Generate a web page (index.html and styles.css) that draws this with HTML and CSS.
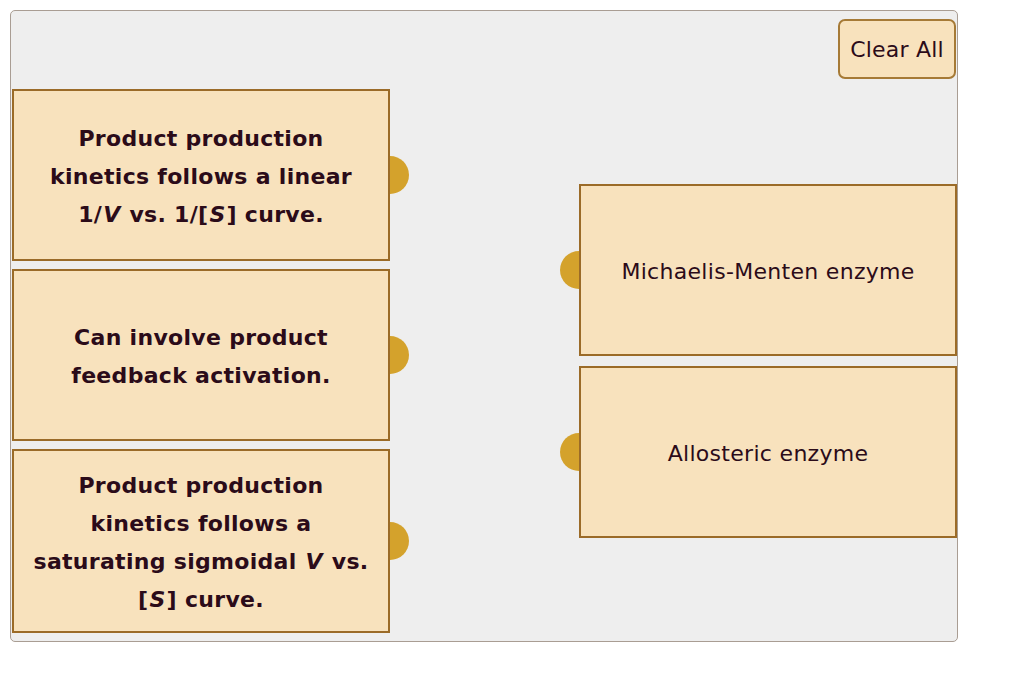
FILE: index.html
```html
<!DOCTYPE html>
<html lang="en">
<head>
<meta charset="utf-8">
<title>Matching</title>
<link rel="stylesheet" href="styles.css">
</head>
<body>
<div class="board">
  <div class="toolbar">
    <button class="clear-btn" type="button">Clear All</button>
  </div>
  <div class="columns">
    <div class="col col-left">
      <div class="card card-source"><p class="card-text bold">Product production kinetics follows a linear 1/<i>V</i> vs. 1/[<i>S</i>] curve.</p></div>
      <div class="card card-source"><p class="card-text bold">Can involve product feedback activation.</p></div>
      <div class="card card-source"><p class="card-text bold">Product production kinetics follows a saturating sigmoidal <i>V</i> vs. [<i>S</i>] curve.</p></div>
    </div>
    <div class="col col-right">
      <div class="card card-target"><p class="card-text">Michaelis-Menten enzyme</p></div>
      <div class="card card-target"><p class="card-text">Allosteric enzyme</p></div>
    </div>
  </div>
</div>
</body>
</html>
```

FILE: styles.css
```css
html, body {
  background: #ffffff;
}
body {
  margin: 10px;
  font-family: "DejaVu Sans", Verdana, sans-serif;
  color: #2b0b19;
}
.board {
  position: relative;
  z-index: 0;
  box-sizing: border-box;
  width: 948px;
  height: 632px;
  background: #eeeeee;
  border: 1px solid #a99d93;
  border-radius: 5px;
  padding: 8px 0 8px 1px;
  display: flex;
  flex-direction: column;
  gap: 10px;
}
.toolbar {
  display: flex;
  justify-content: flex-end;
}
.clear-btn {
  box-sizing: border-box;
  width: 118px;
  height: 60px;
  margin-right: 1px;
  background: #f8e2bd;
  border: 2px solid #a67a36;
  border-radius: 7px;
  font-family: "DejaVu Sans", Verdana, sans-serif;
  font-size: 22px;
  letter-spacing: 0.2px;
  color: #2b0b19;
  padding: 0;
}
.columns {
  display: flex;
  justify-content: space-between;
  align-items: center;
}
.col {
  display: flex;
  flex-direction: column;
  width: 378px;
}
.col-left {
  gap: 8px;
}
.col-right {
  gap: 10px;
}
.card {
  position: relative;
  box-sizing: border-box;
  min-height: 172px;
  background: #f8e2bd;
  border: 2px solid #9b6b28;
  padding: 16px 16px 12px;
  display: flex;
  align-items: center;
  justify-content: center;
  text-align: center;
}
.card::after {
  content: "";
  position: absolute;
  z-index: -1;
  top: 50%;
  width: 38px;
  height: 38px;
  margin-top: -19px;
  border-radius: 50%;
  background: #d4a22c;
}
.card-source::after {
  right: -21px;
}
.card-target::after {
  left: -21px;
}
.card-text {
  margin: 0;
  font-size: 22px;
  line-height: 38px;
  letter-spacing: 0.3px;
}
.card-text.bold {
  font-weight: bold;
}
.card-text i {
  padding: 0 1px;
}
```
